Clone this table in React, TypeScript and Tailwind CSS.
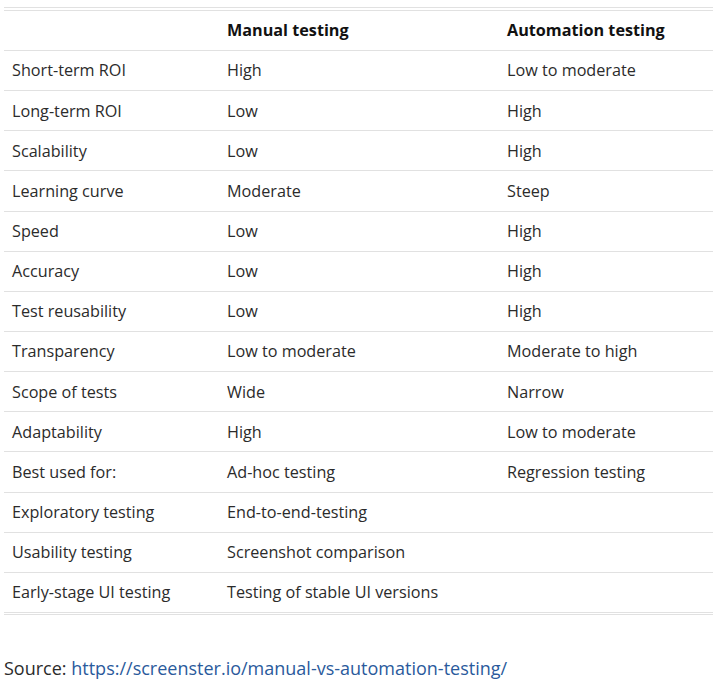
import React from "react";

const rows: [string, string, string][] = [
  ["Short-term ROI", "High", "Low to moderate"],
  ["Long-term ROI", "Low", "High"],
  ["Scalability", "Low", "High"],
  ["Learning curve", "Moderate", "Steep"],
  ["Speed", "Low", "High"],
  ["Accuracy", "Low", "High"],
  ["Test reusability", "Low", "High"],
  ["Transparency", "Low to moderate", "Moderate to high"],
  ["Scope of tests", "Wide", "Narrow"],
  ["Adaptability", "High", "Low to moderate"],
  ["Best used for:", "Ad-hoc testing", "Regression testing"],
  ["Exploratory testing", "End-to-end-testing", ""],
  ["Usability testing", "Screenshot comparison", ""],
  ["Early-stage UI testing", "Testing of stable UI versions", ""],
];

export default function App() {
  return (
    <div
      className="w-[715px] h-[686px] bg-white text-[#2b2b2b] text-[16.2px] overflow-hidden"
      style={{ fontFamily: '"Open Sans", "Noto Sans", sans-serif' }}
    >
      <div className="pt-[7px] pl-[4px] w-[713px]">
        <div className="border-t border-[#e1e1e1] h-[3px]" />
        <div className="grid grid-cols-[215px_280px_1fr] h-[41px] items-center border-t border-b border-[#e1e1e1] font-bold text-[#111] pb-[1px]">
          <div className="pl-[8px]" />
          <div className="pl-[8px]">Manual testing</div>
          <div className="pl-[8px]">Automation testing</div>
        </div>
        {rows.map((r, i) => (
          <div
            key={i}
            className="grid grid-cols-[215px_280px_1fr] h-[40.15px] items-center border-b border-[#e1e1e1]"
          >
            <div className="pl-[8px] whitespace-nowrap">{r[0]}</div>
            <div className="pl-[8px] whitespace-nowrap">{r[1]}</div>
            <div className="pl-[8px] whitespace-nowrap">{r[2]}</div>
          </div>
        ))}
        <div className="h-[2px] border-b border-[#e1e1e1]" />
        <div className="mt-[40px] whitespace-nowrap text-[18px]">
          Source:{" "}
          <a href="#" className="text-[#2a5a9c]">
            https://screenster.io/manual-vs-automation-testing/
          </a>
        </div>
      </div>
    </div>
  );
}
